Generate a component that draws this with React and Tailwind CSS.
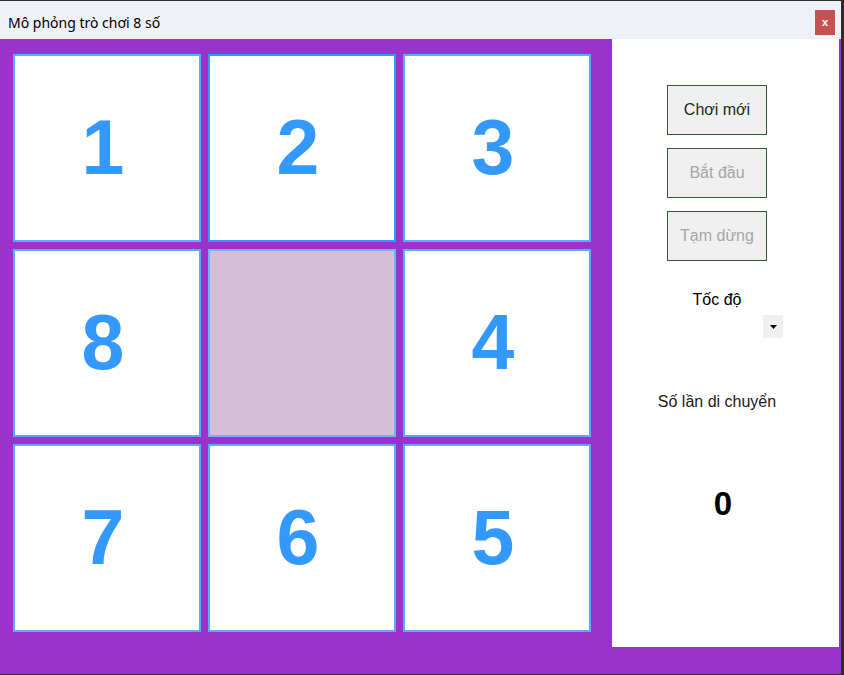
export default function App() {
  const tiles = ['1', '2', '3', '8', '', '4', '7', '6', '5'];

  return (
    <div className="w-[844px] h-[675px] bg-[#2e2b28] pt-[1px] pr-[3px] pb-[1px] overflow-hidden" style={{ fontFamily: '"Liberation Sans", Arial, sans-serif' }}>
      <div className="flex flex-col h-full">
        {/* title bar */}
        <div className="h-[38px] bg-[#eef1f7] flex items-start justify-between pl-[8px] pr-[6px]">
          <span className="mt-[11px] text-[14px] text-black" style={{ fontFamily: '"Noto Sans", sans-serif' }}>
            Mô phỏng trò chơi 8 số
          </span>
          <button className="mt-[9px] w-[20px] h-[25px] bg-[#c75050] text-white text-[11px] font-bold leading-none flex items-center justify-center">
            x
          </button>
        </div>

        {/* body */}
        <div className="flex-1 bg-[#9933cc] flex items-start">
          <div className="grid grid-cols-[188px_188px_188px] grid-rows-[188px_188px_188px] gap-[7px] ml-[13px] mt-[15px]">
            {tiles.map((t, i) =>
              t ? (
                <div
                  key={i}
                  className={
                    'bg-white border-2 flex items-center justify-center pr-[8px] text-[#3399ff] text-[77px] font-bold ' +
                    (i === 1 ? 'border-[#3399ff]' : 'border-[#5aabff]')
                  }
                >
                  {t}
                </div>
              ) : (
                <div key={i} className="bg-[#d5bed6] border-2 border-[#6fb4f5]" />
              )
            )}
          </div>

          {/* side panel */}
          <div className="ml-[21px] w-[227px] h-[608px] bg-white flex flex-col">
            <div className="ml-[55px] mt-[46px] flex flex-col gap-[13px]">
              <button className="w-[100px] h-[50px] bg-[#f0f0f0] border border-[#2d5f2d] text-[16px] text-[#12301a]">
                Chơi mới
              </button>
              <button className="w-[100px] h-[50px] bg-[#f0f0f0] border border-[#2d5f2d] text-[16px] text-[#a6a6a6]">
                Bắt đầu
              </button>
              <button className="w-[100px] h-[50px] bg-[#f0f0f0] border border-[#2d5f2d] text-[16px] text-[#a6a6a6]">
                Tạm dừng
              </button>
            </div>

            <div className="w-[210px] text-center text-[16px] text-black mt-[27px]">Tốc độ</div>
            <div className="ml-[151px] mt-[3px] w-[20px] h-[23px] bg-[#f0f0f0] flex items-center justify-center">
              <svg width="7" height="4" viewBox="0 0 7 4">
                <path d="M0 0 L7 0 L3.5 4 Z" fill="#000" />
              </svg>
            </div>

            <div className="w-[210px] text-center text-[16px] text-[#1a1a1a] mt-[52px]">Số lần di chuyển</div>
            <div className="w-[222px] text-center text-[33px] font-bold text-black mt-[73px] leading-none">0</div>
          </div>
        </div>
      </div>
    </div>
  );
}
